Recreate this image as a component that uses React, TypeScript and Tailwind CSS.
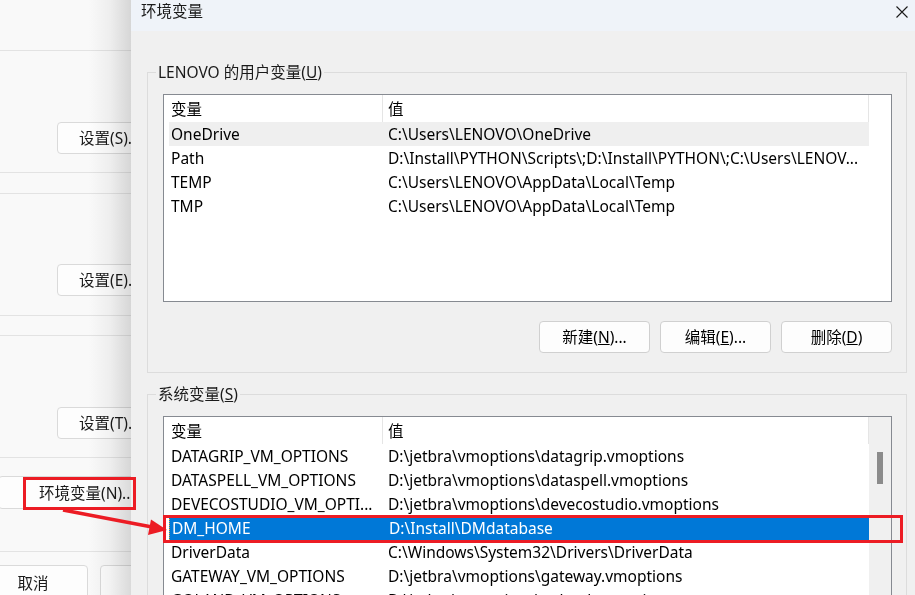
import React from "react";

const userVars: [string, string][] = [
  ["OneDrive", "C:\\Users\\LENOVO\\OneDrive"],
  ["Path", "D:\\Install\\PYTHON\\Scripts\\;D:\\Install\\PYTHON\\;C:\\Users\\LENOV..."],
  ["TEMP", "C:\\Users\\LENOVO\\AppData\\Local\\Temp"],
  ["TMP", "C:\\Users\\LENOVO\\AppData\\Local\\Temp"],
];

const sysVars: [string, string][] = [
  ["DATAGRIP_VM_OPTIONS", "D:\\jetbra\\vmoptions\\datagrip.vmoptions"],
  ["DATASPELL_VM_OPTIONS", "D:\\jetbra\\vmoptions\\dataspell.vmoptions"],
  ["DEVECOSTUDIO_VM_OPTI...", "D:\\jetbra\\vmoptions\\devecostudio.vmoptions"],
  ["DM_HOME", "D:\\Install\\DMdatabase"],
  ["DriverData", "C:\\Windows\\System32\\Drivers\\DriverData"],
  ["GATEWAY_VM_OPTIONS", "D:\\jetbra\\vmoptions\\gateway.vmoptions"],
  ["GOLAND_VM_OPTIONS", "D:\\jetbra\\vmoptions\\goland.vmoptions"],
];

function Header() {
  return (
    <div className="flex h-[27px] items-center">
      <div className="w-[219px] h-full flex items-center pl-[7px] border-r border-[#e5e5e5]">变量</div>
      <div className="w-[486px] h-full flex items-center pl-[5px] border-r border-[#e5e5e5]">值</div>
    </div>
  );
}

function Row({ name, value, hover, selected }: { name: string; value: string; hover?: boolean; selected?: boolean }) {
  return (
    <div
      className={
        "ml-[5px] w-[700px] h-[24px] flex items-center whitespace-nowrap " +
        (selected ? "bg-[#0078d7] text-white border-l border-dotted border-[#f0a030]" : hover ? "bg-[#efefef]" : "")
      }
    >
      <div className="w-[214px] pl-[2px] overflow-hidden">{name}</div>
      <div className="flex-1 pl-[5px] overflow-hidden">{value}</div>
    </div>
  );
}

function LeftButton({ label }: { label: string }) {
  return (
    <div className="ml-[57px] w-[110px] h-[32px] border border-[#dadada] rounded-[4px] bg-[#fdfdfd] flex items-center pl-[21px] whitespace-nowrap shrink-0">
      {label}
    </div>
  );
}

function DlgButton({ children }: { children: React.ReactNode }) {
  return (
    <div className="w-[111px] h-[32px] border border-[#d0d0d0] rounded-[4px] bg-[#fdfdfd] flex items-center justify-center whitespace-nowrap">
      {children}
    </div>
  );
}

export default function App() {
  return (
    <div className="relative w-[915px] h-[595px] overflow-hidden flex text-[15.5px] text-[#1a1a1a] font-['Noto_Sans','Noto_Sans_CJK_SC',sans-serif] leading-[20px]">
      {/* background window */}
      <div className="relative w-[131px] shrink-0 bg-[#f9f9f9] overflow-hidden flex flex-col">
        <div className="h-[51px] shrink-0 border-b border-[#e3e3e3]" />
        <div className="h-[122px] shrink-0 pt-[71px] border-b border-[#e3e3e3]">
          <LeftButton label="设置(S)..." />
        </div>
        <div className="h-[21px] shrink-0 border-b border-[#e3e3e3]" />
        <div className="h-[122px] shrink-0 pt-[70px] border-b border-[#e3e3e3]">
          <LeftButton label="设置(E)..." />
        </div>
        <div className="h-[20px] shrink-0 border-b border-[#e3e3e3]" />
        <div className="h-[122px] shrink-0 pt-[71px] border-b border-[#e3e3e3]">
          <LeftButton label="设置(T)..." />
        </div>
        <div className="h-[94px] shrink-0 pt-[18px] border-b border-[#e3e3e3]">
          <div className="-ml-[2px] w-[180px] h-[33px] border border-[#dadada] rounded-[4px] bg-[#fdfdfd] flex items-center pl-[40px] whitespace-nowrap">
            环境变量(N)...
          </div>
        </div>
        <div className="flex gap-[12px] pt-[13px]">
          <div className="shrink-0 -ml-[22px] w-[110px] h-[40px] border border-[#dadada] rounded-t-[4px] bg-[#fdfdfd] flex justify-center pt-[7px]">取消</div>
          <div className="shrink-0 w-[110px] h-[40px] border border-[#dadada] rounded-t-[4px] bg-[#fdfdfd]" />
        </div>
        {/* shadow cast by the dialog */}
        <div className="absolute top-0 right-0 w-[42px] h-full bg-gradient-to-r from-white via-[#f4f4f4] to-[#dcdcdc] mix-blend-multiply pointer-events-none" />
      </div>

      {/* dialog */}
      <div className="flex-1 bg-[#f0f0f0] flex flex-col">
        <div className="h-[31px] bg-[#eff3f9] flex items-start justify-between pl-[10px] pr-[7px] pt-[1px] shrink-0">
          <span>环境变量</span>
          <svg width="12" height="12" viewBox="0 0 12 12" className="mt-[5px]">
            <path d="M0.5 0.5 L11.5 11.5 M11.5 0.5 L0.5 11.5" stroke="#1a1a1a" strokeWidth="1.1" />
          </svg>
        </div>
        <div className="pl-[16px] pr-[8px]">
          <fieldset className="mt-[31px] border border-[#dcdcdc] pl-[15px] pr-[14px] pb-[19px]">
            <legend className="-ml-[7px] px-[2px]">
              LENOVO 的用户变量(<span className="underline">U</span>)
            </legend>
            <div className="mt-[12px] h-[208px] border border-[#868a91] bg-white pr-[2px] text-black">
              <Header />
              {userVars.map(([n, v], i) => (
                <Row key={n} name={n} value={v} hover={i === 0} />
              ))}
            </div>
            <div className="mt-[19px] flex justify-end gap-[10px] text-black">
              <DlgButton>新建(<span className="underline">N</span>)...</DlgButton>
              <DlgButton>编辑(<span className="underline">E</span>)...</DlgButton>
              <DlgButton>删除(<span className="underline">D</span>)</DlgButton>
            </div>
          </fieldset>
          <fieldset className="mt-[11px] border border-[#dcdcdc] pl-[15px] pr-[14px] pb-[19px]">
            <legend className="-ml-[7px] px-[2px]">
              系统变量(<span className="underline">S</span>)
            </legend>
            <div className="mt-[12px] h-[240px] border border-[#868a91] bg-white text-black flex">
              <div className="w-[705px]">
                <Header />
                {sysVars.map(([n, v], i) => (
                  <Row key={n} name={n} value={v} selected={i === 3} />
                ))}
              </div>
              <div className="flex-1 bg-[#f0f0f0] pt-[35px] pl-[8px]">
                <div className="w-[6px] h-[32px] bg-[#8b8b8b]" />
              </div>
            </div>
          </fieldset>
        </div>
      </div>

      {/* annotations */}
      <div className="absolute left-[23px] top-[477px] w-[113px] h-[33px] border-[3px] border-[#ec1c24] pointer-events-none" />
      <div className="absolute left-[163px] top-[515px] w-[740px] h-[28px] border-[3px] border-[#ec1c24] pointer-events-none" />
      <svg className="absolute left-0 top-0 pointer-events-none" width="915" height="595">
        <line x1="63" y1="510" x2="152" y2="527" stroke="#ec1c24" strokeWidth="3.5" />
        <polygon points="167,530 151,519.5 148,535" fill="#ec1c24" />
      </svg>
    </div>
  );
}
